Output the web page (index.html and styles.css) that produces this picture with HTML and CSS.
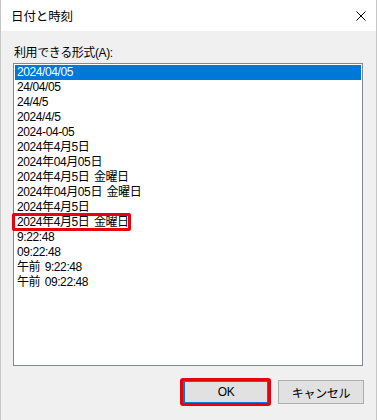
FILE: index.html
```html
<!DOCTYPE html>
<html lang="ja">
<head>
    <meta charset="UTF-8">
    <title>日付と時刻</title>
    <link rel="stylesheet" href="styles.css">
</head>
<body>
    <div class="dialog">
        <div class="title-bar">
            <span class="title-text">日付と時刻</span>
            <svg class="close-icon" width="10" height="10" viewBox="0 0 10 10">
                <path d="M0.5 0.5 L9.5 9.5 M9.5 0.5 L0.5 9.5" stroke="#000" stroke-width="1" fill="none"/>
            </svg>
        </div>
        <div class="dialog-body">
            <div class="field-label">利用できる形式(A):</div>
            <div class="format-list">
                <div class="format-item selected">2024/04/05</div>
                <div class="format-item">24/04/05</div>
                <div class="format-item">24/4/5</div>
                <div class="format-item">2024/4/5</div>
                <div class="format-item">2024-04-05</div>
                <div class="format-item">2024年4月5日</div>
                <div class="format-item">2024年04月05日</div>
                <div class="format-item">2024年4月5日 金曜日</div>
                <div class="format-item">2024年04月05日 金曜日</div>
                <div class="format-item">2024年4月5日</div>
                <div class="format-item"><span class="highlight">2024年4月5日 金曜日</span></div>
                <div class="format-item">9:22:48</div>
                <div class="format-item">09:22:48</div>
                <div class="format-item">午前 9:22:48</div>
                <div class="format-item">午前 09:22:48</div>
            </div>
            <div class="button-row">
                <button class="dlg-btn default-btn highlight-btn">OK</button>
                <button class="dlg-btn">キャンセル</button>
            </div>
        </div>
    </div>
</body>
</html>
```

FILE: styles.css
```css
* {
    box-sizing: border-box;
}

body {
    margin: 0;
    background: #ffffff;
    font-family: "Liberation Sans", "Noto Sans CJK JP", sans-serif;
    font-size: 12px;
    color: #000;
}

.dialog {
    width: 377px;
    height: 420px;
    border-left: 1px solid #c6c6c6;
    border-right: 1px solid #c6c6c6;
    display: flex;
    flex-direction: column;
}

.title-bar {
    height: 31px;
    background: #ffffff;
    display: flex;
    align-items: center;
    justify-content: space-between;
    padding: 0 10px 0 10px;
}

.title-text {
    font-size: 12.5px;
    letter-spacing: -0.1px;
}

.close-icon {
    display: block;
}

.dialog-body {
    flex: 1;
    background: #f0f0f0;
    padding: 13px 12px 0 12px;
}

.field-label {
    height: 18px;
    line-height: 18px;
    padding-left: 1px;
    letter-spacing: -0.4px;
    margin-bottom: 1px;
}

.format-list {
    width: 350px;
    height: 303px;
    background: #ffffff;
    border: 1px solid #828790;
    padding: 1px;
}

.format-item {
    height: 15px;
    line-height: 15px;
    padding-left: 2px;
    font-size: 12px;
    letter-spacing: -0.4px;
    word-spacing: 1.5px;
    white-space: nowrap;
}

.format-item.selected {
    background: #0078d7;
    color: #ffffff;
}

.highlight {
    position: relative;
}

.highlight::after {
    content: "";
    position: absolute;
    left: -5px;
    right: -2px;
    top: -2px;
    bottom: -2px;
    border: 3px solid #e8000b;
    border-radius: 2px;
}

.button-row {
    display: flex;
    justify-content: flex-end;
    gap: 9px;
    margin-top: 14px;
}

.dlg-btn {
    width: 86px;
    height: 24px;
    margin: 0;
    padding: 0;
    background: #e1e1e1;
    border: 1px solid #adadad;
    font-family: "Liberation Sans", "Noto Sans CJK JP", sans-serif;
    font-size: 12px;
    color: #000;
    letter-spacing: -0.3px;
}

.default-btn {
    border: 2px solid #0078d7;
}

.highlight-btn {
    position: relative;
}

.highlight-btn::after {
    content: "";
    position: absolute;
    left: -5px;
    right: -4px;
    top: -4px;
    bottom: -4px;
    border: 3px solid #e8000b;
    border-radius: 3px;
}
```
